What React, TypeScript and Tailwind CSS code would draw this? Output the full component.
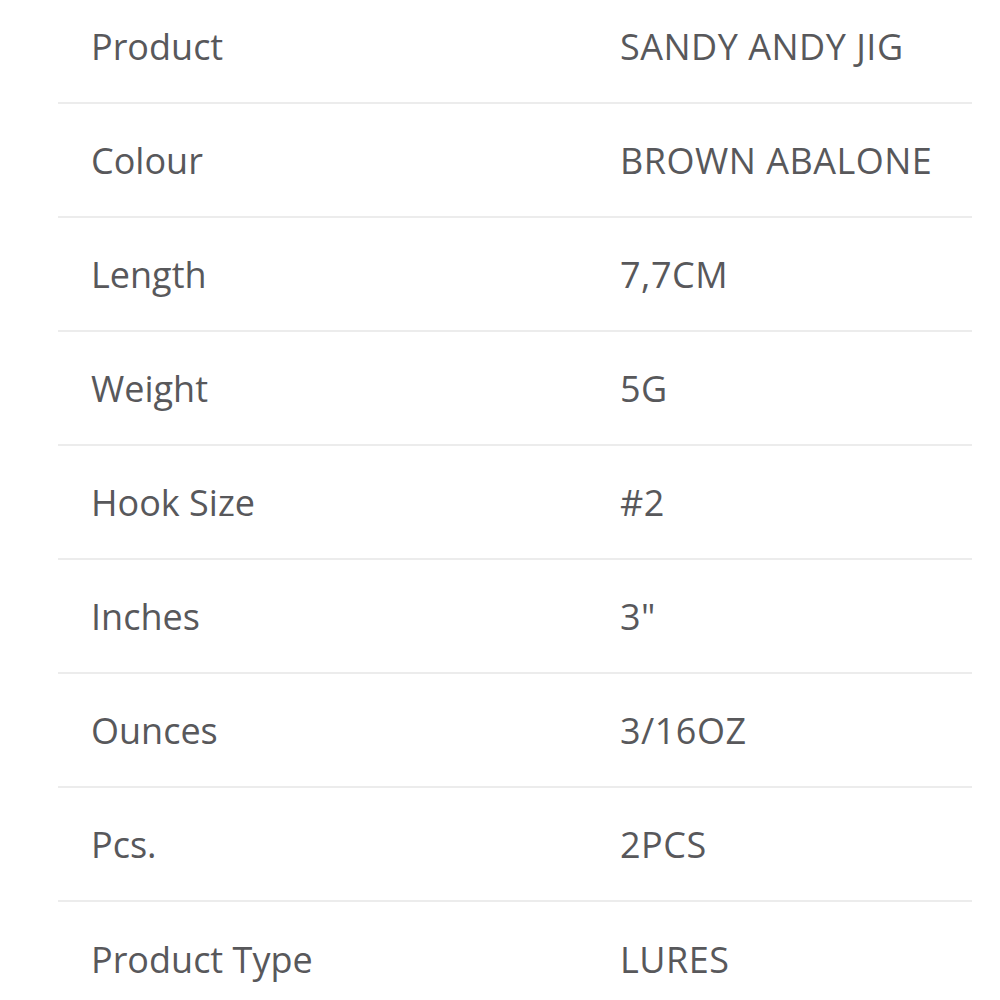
import React from "react";

const rows: [string, string][] = [
  ["Product", "SANDY ANDY JIG"],
  ["Colour", "BROWN ABALONE"],
  ["Length", "7,7CM"],
  ["Weight", "5G"],
  ["Hook Size", "#2"],
  ["Inches", "3\""],
  ["Ounces", "3/16OZ"],
  ["Pcs.", "2PCS"],
  ["Product Type", "LURES"],
];

export default function App() {
  return (
    <div className="w-[1000px] h-[1000px] overflow-hidden bg-white" style={{ fontFamily: '"Open Sans", "Noto Sans", sans-serif' }}>
      <div className="ml-[58px] mt-[-10px] w-[914px]">
        {rows.map(([k, v], i) => (
          <div
            key={k}
            className={`grid grid-cols-[562px_1fr] items-center h-[114px] text-[36px] text-[#58585b] ${i < rows.length - 1 ? "border-b-2 border-[#ececec]" : ""}`}
          >
            <div className="pl-[33px] pt-[1px]">{k}</div>
            <div className="tracking-[0.5px] pt-[1px]">{v}</div>
          </div>
        ))}
      </div>
    </div>
  );
}
